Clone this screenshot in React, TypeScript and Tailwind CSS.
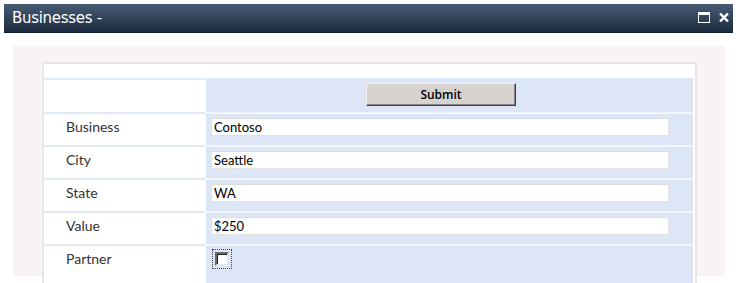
import React from "react";

const rows = [
  { label: "Business", value: "Contoso" },
  { label: "City", value: "Seattle" },
  { label: "State", value: "WA" },
  { label: "Value", value: "$250" },
];

export default function App() {
  return (
    <div className="w-[739px] h-[283px] bg-white overflow-hidden">
      <div className="ml-[4px] mt-[4px] w-[729px] h-[29px] bg-gradient-to-b from-[#485c74] to-[#1c2c40] border-b border-[#14202e] flex items-center justify-between">
        <span className="pl-[8px] text-white text-[15px] leading-none font-['DejaVu_Sans',sans-serif] tracking-[-0.3px]">
          Businesses -
        </span>
        <div className="flex items-center gap-[9px] pr-[4px] pb-[2px]">
          <svg width="12" height="11" viewBox="0 0 12 11">
            <rect x="0.5" y="0.5" width="11" height="10" fill="none" stroke="#fff" strokeWidth="1" />
            <rect x="0" y="0" width="12" height="3" fill="#fff" />
          </svg>
          <svg width="10" height="9" viewBox="0 0 10 9">
            <path d="M1 0.5 L9 8.5 M9 0.5 L1 8.5" stroke="#fff" strokeWidth="2.4" />
          </svg>
        </div>
      </div>
      <div className="ml-[13px] mt-[13px] w-[712px] h-[230px] bg-[#f7f3f6] pt-[16px] pl-[29px]">
        <div className="w-[655px] h-[300px] bg-white border-2 border-[#e9e5e9] pr-[2px] font-['Lato',sans-serif]">
          <div className="h-[14px]" />
          <div className="grid grid-cols-[161px_1fr] gap-x-[1px]">
            <div className="h-[34px] border-t-2 border-[#e1e9f7]" />
            <div className="h-[34px] bg-[#dde6f6] border-t-2 border-[#dde6f6] pl-[160px] pt-[3px]">
              <button className="w-[150px] h-[23px] bg-[#d6d3ce] border border-t-[#f4f2ee] border-l-[#f4f2ee] border-r-[#404040] border-b-[#404040] shadow-[inset_-1px_-1px_0_#888] text-[12px] text-black font-['Open_Sans',sans-serif] font-semibold leading-none flex items-center justify-center pt-[1px]">
                Submit
              </button>
            </div>
            {rows.map((r) => (
              <React.Fragment key={r.label}>
                <div className="h-[33px] border-t-2 border-[#e1e9f7] pl-[22px] pt-[2px] text-[14px] text-[#333]">
                  {r.label}
                </div>
                <div className="h-[33px] bg-[#dde6f6] border-t-2 border-[#f3f6fc] pl-[5px] pt-[4px]">
                  <div className="w-[458px] h-[18px] bg-white border border-[#e2e2e2] border-t-[#dcdcdc] pl-[2px] text-[13px] text-black leading-[16px]">
                    {r.value}
                  </div>
                </div>
              </React.Fragment>
            ))}
            <div className="h-[40px] border-t-2 border-[#e1e9f7] pl-[22px] pt-[2px] text-[14px] text-[#333]">
              Partner
            </div>
            <div className="h-[40px] bg-[#dde6f6] border-t-2 border-[#f3f6fc] pl-[6px] pt-[3px]">
              <div className="w-[20px] h-[20px] border border-dotted border-[#444] flex items-center justify-center">
                <div className="w-[14px] h-[14px] bg-white border-2 border-t-[#6b6b6b] border-l-[#6b6b6b] border-r-[#e8e8e8] border-b-[#e8e8e8] shadow-[inset_1px_1px_0_#222]" />
              </div>
            </div>
          </div>
        </div>
      </div>
    </div>
  );
}
